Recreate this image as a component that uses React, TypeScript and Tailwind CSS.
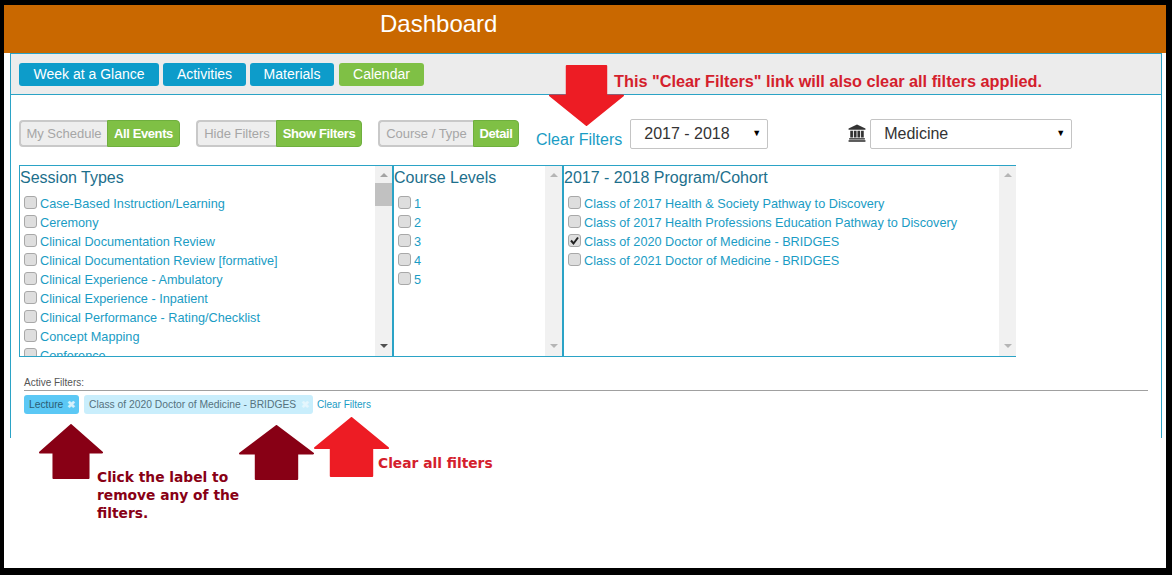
import { FC } from "react";

const sessionTypes = [
  "Case-Based Instruction/Learning",
  "Ceremony",
  "Clinical Documentation Review",
  "Clinical Documentation Review [formative]",
  "Clinical Experience - Ambulatory",
  "Clinical Experience - Inpatient",
  "Clinical Performance - Rating/Checklist",
  "Concept Mapping",
  "Conference",
];
const levels = ["1", "2", "3", "4", "5"];
const cohorts = [
  "Class of 2017 Health & Society Pathway to Discovery",
  "Class of 2017 Health Professions Education Pathway to Discovery",
  "Class of 2020 Doctor of Medicine - BRIDGES",
  "Class of 2021 Doctor of Medicine - BRIDGES",
];

const Toggle: FC<{ off: string; on: string; offW: string; onW: string }> = ({ off, on, offW, onW }) => (
  <div className="flex h-[27px] text-[13px]">
    <span className={`${offW} flex items-center justify-center whitespace-nowrap rounded-l-[4px] border-2 border-r-0 border-[#c9c9c9] bg-[#eeeeee] text-[#a6a6a6]`}>
      {off}
    </span>
    <span className={`${onW} flex items-center justify-center whitespace-nowrap rounded-r-[4px] border border-[#6faf3e] bg-[#7fc045] font-bold tracking-[-0.4px] text-white`}>
      {on}
    </span>
  </div>
);

const Check: FC<{ checked?: boolean }> = ({ checked }) => (
  <span className="relative mb-[2px] h-[13px] w-[13px] shrink-0 rounded-[3px] border border-[#a8a8a8] bg-[#dedede]">
    {checked && (
      <svg viewBox="0 0 13 13" className="absolute -left-px -top-px h-[13px] w-[13px]">
        <path d="M3 6.5 L5.5 9.5 L10 3.5" fill="none" stroke="#222" strokeWidth="2" />
      </svg>
    )}
  </span>
);

const ScrollBar: FC<{ thumb?: boolean }> = ({ thumb }) => (
  <div className="flex h-full w-[17px] shrink-0 flex-col items-center bg-[#f1f1f1]">
    <span className={`mt-[7px] h-0 w-0 border-x-[4px] border-b-[4px] border-x-transparent ${thumb ? "border-b-[#a3a3a3]" : "border-b-[#b5b5b5]"}`} />
    {thumb && <span className="mt-[6px] h-[23px] w-full bg-[#c1c1c1]" />}
    <span className={`mb-[8px] mt-auto h-0 w-0 border-x-[4px] border-t-[4px] border-x-transparent ${thumb ? "border-t-[#505050]" : "border-t-[#b5b5b5]"}`} />
  </div>
);

const FilterColumn: FC<{
  title: string;
  items: string[];
  width: string;
  checkedItem?: string;
  thumb?: boolean;
  first?: boolean;
}> = ({ title, items, width, checkedItem, thumb, first }) => (
  <div className={`${width} flex h-[192px] border-y border-[#2ba3c6] ${first ? "border-l" : "border-l-2"}`}>
    <div className="min-w-0 flex-1 overflow-hidden">
      <h3 className="mt-[2px] h-[26px] text-[16px] leading-[20px] text-[#1d6f8c]">{title}</h3>
      <ul className="pl-[4px]">
        {items.map((item) => (
          <li key={item} className="flex h-[19px] items-center gap-[3px] text-[12.7px] text-[#1a9cc4]">
            <Check checked={item === checkedItem} />
            <span className="mt-[2px] whitespace-nowrap">{item}</span>
          </li>
        ))}
      </ul>
    </div>
    <ScrollBar thumb={thumb} />
  </div>
);

const Select: FC<{ label: string; width: string }> = ({ label, width }) => (
  <div className={`${width} flex h-[30px] items-center justify-between rounded-[2px] border border-[#c4c4c4] bg-white pl-[13px] pr-[6px] text-[16px] text-[#333333]`}>
    <span>{label}</span>
    <span className="text-[9px] text-black">▼</span>
  </div>
);

// annotation arrows sit over the page, same as in the screenshot
const Arrow: FC<{ className: string; color: string; down?: boolean }> = ({ className, color, down }) => (
  <svg viewBox="0 0 76 58" className={`absolute ${className}`} preserveAspectRatio="none">
    <path
      d={down ? "M18 1 H58 V29 H75 L38 57 L1 29 H18 Z" : "M38 1 L75 30 H59 V57 H17 V30 H1 Z"}
      fill={color}
      stroke={color}
      strokeLinejoin="round"
      strokeWidth="2"
    />
  </svg>
);

export default function App() {
  return (
    <div className="relative h-[575px] w-[1172px] overflow-hidden bg-black pb-[7px] pl-[4px] pr-[6px] pt-[5px] font-['Liberation_Sans',sans-serif]">
      <div className="h-full bg-white">
        <header className="flex h-[48px] items-start bg-[#c96800] pl-[376px] pt-[5px] text-[24px] leading-[28px] text-white">
          Dashboard
        </header>
        <main className="ml-[6px] mr-[4px] h-[385px] border-x border-[#2ba3c6]">
          <nav className="flex h-[42px] items-center gap-[4px] border-y border-[#2ba3c6] bg-[#ececec] pl-[8px] text-[14px] text-white">
            <span className="flex h-[23px] w-[140px] items-center justify-center rounded-[3px] bg-[#0d9cca]">Week at a Glance</span>
            <span className="flex h-[23px] w-[83px] items-center justify-center rounded-[3px] bg-[#0d9cca]">Activities</span>
            <span className="flex h-[23px] w-[84px] items-center justify-center rounded-[3px] bg-[#0d9cca]">Materials</span>
            <span className="ml-[1px] flex h-[23px] w-[85px] items-center justify-center rounded-[3px] bg-[#7fc045]">Calendar</span>
          </nav>

          <section className="flex items-start pl-[8px] pt-[25px]">
            <Toggle off="My Schedule" on="All Events" offW="w-[88px]" onW="w-[73px]" />
            <div className="ml-[16px]">
              <Toggle off="Hide Filters" on="Show Filters" offW="w-[80px]" onW="w-[86px]" />
            </div>
            <div className="ml-[16px]">
              <Toggle off="Course / Type" on="Detail" offW="w-[95px]" onW="w-[46px]" />
            </div>
            <a className="ml-[17px] mt-[11px] text-[16px] leading-[18px] text-[#1a9cc4]">Clear Filters</a>
            <div className="ml-[8px] -mt-[1px]">
              <Select label="2017 - 2018" width="w-[138px]" />
            </div>
            <svg viewBox="0 0 16 16" className="ml-[80px] mt-[4px] h-[18px] w-[18px]" fill="#333333">
              <path d="M8 0.5 L15.5 4 V5 H0.5 V4 Z" />
              <rect x="2" y="6" width="2.4" height="6" />
              <rect x="5.2" y="6" width="2.4" height="6" />
              <rect x="8.4" y="6" width="2.4" height="6" />
              <rect x="11.6" y="6" width="2.4" height="6" />
              <rect x="1" y="12.6" width="14" height="1.2" />
              <rect x="0.5" y="14.4" width="15" height="1.4" />
            </svg>
            <div className="ml-[4px] -mt-[1px]">
              <Select label="Medicine" width="w-[202px]" />
            </div>
          </section>

          <section className="ml-[8px] mt-[16px] flex w-[997px]">
            <FilterColumn title="Session Types" items={sessionTypes} width="w-[373px]" thumb first />
            <FilterColumn title="Course Levels" items={levels} width="w-[170px]" />
            <FilterColumn title="2017 - 2018 Program/Cohort" items={cohorts} width="w-[454px]" checkedItem={cohorts[2]} />
          </section>

          <section className="ml-[13px] mr-[13px] mt-[20px]">
            <div className="border-b border-[#a0a0a0] pb-[2px] text-[10px] leading-[11px] text-[#555555]">Active Filters:</div>
            <div className="mt-[4px] flex items-center gap-[5px] text-[10.3px]">
              <span className="flex h-[19px] w-[55px] items-center justify-between rounded-[3px] bg-[#5bc8f5] pl-[5px] pr-[4px] text-[#2b5d73]">
                Lecture <span className="font-bold text-[#d5f1fc]">✖</span>
              </span>
              <span className="flex h-[19px] w-[229px] items-center justify-between whitespace-nowrap rounded-[3px] bg-[#c9eefc] pl-[5px] pr-[4px] text-[#55727e]">
                Class of 2020 Doctor of Medicine - BRIDGES <span className="font-bold text-[#e4f6fd]">✖</span>
              </span>
              <a className="-ml-px text-[10px] text-[#1a9cc4]">Clear Filters</a>
            </div>
          </section>
        </main>
      </div>

      <Arrow className="left-[549px] top-[65px] h-[61px] w-[75px]" color="#ed1c24" down />
      <p className="absolute left-[614px] top-[72px] whitespace-nowrap text-[16.3px] font-bold leading-[18px] text-[#d4202c]">
        This "Clear Filters" link will also clear all filters applied.
      </p>
      <Arrow className="left-[39px] top-[424px] h-[55px] w-[64px]" color="#880015" />
      <Arrow className="left-[239px] top-[425px] h-[55px] w-[75px]" color="#880015" />
      <Arrow className="left-[314px] top-[417px] h-[60px] w-[75px]" color="#ed1c24" />
      <p className="absolute left-[97px] top-[468px] w-[160px] font-['DejaVu_Sans',sans-serif] text-[13.8px] font-bold leading-[18px] text-[#880015]">
        Click the label to remove any of the filters.
      </p>
      <p className="absolute left-[378px] top-[454px] font-['DejaVu_Sans',sans-serif] text-[13.8px] font-bold leading-[18px] text-[#d4202c]">
        Clear all filters
      </p>
    </div>
  );
}
